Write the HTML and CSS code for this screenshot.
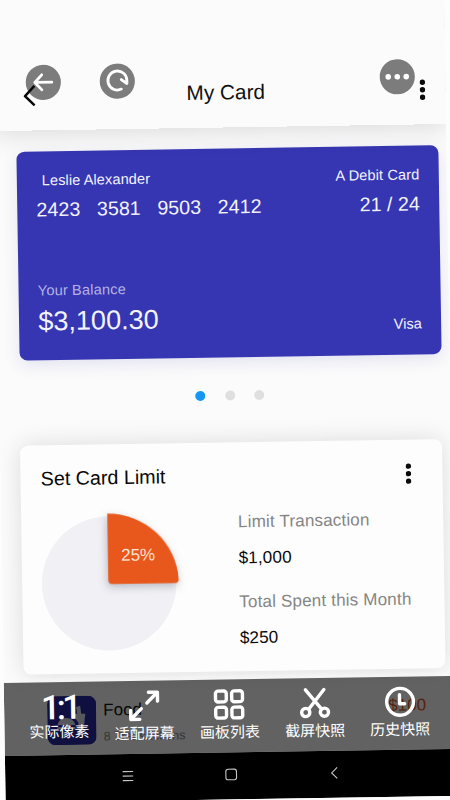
FILE: index.html
```html
<!DOCTYPE html>
<html lang="zh">
<head>
<meta charset="utf-8">
<title>My Card</title>
<link rel="stylesheet" href="styles.css">
</head>
<body>
<div class="screen">
  <header class="header">
    <svg class="chevron" viewBox="0 0 12 22"><path d="M11 1.5 1.5 11.5 11 21" fill="none" stroke="#080808" stroke-width="2.5"/></svg>
    <h1>My Card</h1>
    <svg class="dots" viewBox="0 0 6 22"><circle cx="3" cy="3.9" r="2.7"/><circle cx="3" cy="11.4" r="2.7"/><circle cx="3" cy="18.9" r="2.7"/></svg>
  </header>
  <section class="card">
    <div class="row name"><span>Leslie Alexander</span><span class="kind">A Debit Card</span></div>
    <div class="row number">
      <div class="groups"><span>2423</span><span>3581</span><span>9503</span><span>2412</span></div>
      <span>21 / 24</span>
    </div>
    <div class="label">Your Balance</div>
    <div class="row"><span class="amount">$3,100.30</span><span class="brand">Visa</span></div>
  </section>
  <div class="pager"><i class="on"></i><i></i><i></i></div>
  <section class="limit">
    <div class="row limit-head">
      <h2>Set Card Limit</h2>
      <svg class="dots" viewBox="0 0 6 22"><circle cx="3" cy="3.5" r="2.7"/><circle cx="3" cy="11" r="2.7"/><circle cx="3" cy="18.5" r="2.7"/></svg>
    </div>
    <div class="limit-body">
      <svg class="pie" viewBox="0 0 150 150">
        <circle cx="75" cy="75" r="67.2" fill="#f0f0f5"/>
        <path class="slice" d="M74.2 5.3A71 70.5 0 0 1 144.6 72Q144.6 75.8 141 75.8H78.2Q74.2 75.8 74.2 71.8Z"/>
        <text x="87.4" y="52.7">25%</text>
      </svg>
      <dl>
        <dt>Limit Transaction</dt><dd>$1,000</dd>
        <dt>Total Spent this Month</dt><dd>$250</dd>
      </dl>
    </div>
  </section>
  <section class="list">
    <svg class="food" viewBox="0 0 49 49"><rect width="49" height="49" rx="8" fill="#2a2ba6"/><path d="M10 29Q12 22 19 22T28 29ZM10 31H28V33H10ZM25 18H30L29 11 33 10 34 18H38L36 36H31V27Z" fill="#fff" opacity=".85"/></svg>
    <div class="item"><div class="item-name">Food</div><div class="item-sub">8 Transactions</div></div>
    <div class="price">$100</div>
  </section>

  <div class="floating">
    <svg viewBox="0 0 36 36"><circle cx="18" cy="18" r="17.6" fill="#7c7c7c"/><path d="M26.5 18H10M16.5 10.5 9.5 18 16.5 25.5"/></svg>
    <svg viewBox="0 0 36 36"><circle cx="18" cy="18" r="17.6" fill="#7c7c7c"/><path d="M22 26A9.5 9.5 0 1 1 27.6 17.5V20.5L22 16.5"/></svg>
    <svg class="more" viewBox="0 0 36 36"><circle cx="18" cy="18" r="17.6" fill="#7c7c7c"/><g fill="#fff"><circle cx="9" cy="18" r="2.8"/><circle cx="18" cy="18" r="2.8"/><circle cx="27" cy="18" r="2.8"/></g></svg>
  </div>

  <footer class="bottom">
    <div class="tools">
      <div class="tool first"><b>1:1</b><span>实际像素</span></div>
      <div class="tool"><svg viewBox="0 0 32 32"><path d="M18.8 13.2 29 3M20.5 2.5H29.5V11.5M13.2 18.8 3 29M2.5 20.5V29.5H11.5"/></svg><span>适配屏幕</span></div>
      <div class="tool"><svg viewBox="0 0 32 32"><rect x="2.5" y="2.5" width="10.8" height="10.8" rx="2.6"/><rect x="18.7" y="2.5" width="10.8" height="10.8" rx="2.6"/><rect x="2.5" y="18.7" width="10.8" height="10.8" rx="2.6"/><rect x="18.7" y="18.7" width="10.8" height="10.8" rx="2.6"/></svg><span>画板列表</span></div>
      <div class="tool"><svg viewBox="0 0 32 32"><path d="M6.5 2.5 22.5 22M25 2.5 9.5 22"/><circle cx="6.5" cy="25.2" r="4.1"/><circle cx="25.2" cy="25.2" r="4.1"/></svg><span>截屏快照</span></div>
      <div class="tool"><svg viewBox="0 0 32 32"><circle cx="16" cy="16" r="13.4"/><path d="M15.5 9V18H20.5"/></svg><span>历史快照</span></div>
    </div>
    <div class="nav">
      <svg viewBox="0 0 14 14"><path d="M1.5 2.5H12M1.5 7H12M1.5 11.5H12"/></svg>
      <svg viewBox="0 0 14 14"><rect x="1.7" y="1.7" width="10.6" height="10.6" rx="2.2"/></svg>
      <svg viewBox="0 0 14 14"><path d="M10 1.5 4.5 7 10 12.5"/></svg>
    </div>
  </footer>
</div>
</body>
</html>
```
FILE: styles.css
```css
* { box-sizing: border-box; }
html { overflow: hidden; background: #fff; }
body { margin: 0; width: 450px; height: 800px; overflow: hidden; background: #fdfdfd; font-family: "Liberation Sans", "Noto Sans CJK SC", sans-serif; }
h1, h2, dl, dd { margin: 0; font-weight: 400; }
svg { display: block; flex: none; }

.screen { position: relative; width: 451.4px; height: 803.4px; margin-left: -6.7px; background: #fbfbfb; transform: rotate(-0.9deg); transform-origin: 6.7px 0; overflow: hidden; }
.row { display: flex; justify-content: space-between; }

.header { position: relative; z-index: 1; display: grid; grid-template-columns: 163px 1fr auto; align-items: center; height: 131.2px; padding: 60.8px 20.6px 0 29px; box-shadow: 0 5px 24px rgba(0, 0, 0, .12); }
.chevron { width: 12px; height: 22px; }
.header h1 { font-size: 20.8px; line-height: 24px; color: #111; }
.dots { width: 6px; height: 22px; fill: #0b0b0b; }

.card { position: relative; margin: 20.6px 0 0 20.6px; width: 422px; height: 209.6px; padding: 20px 19px 0 19.6px; border-radius: 8px; background: #3636b2; color: #f3f3fc; box-shadow: 0 5px 16px rgba(60, 60, 180, .13); font-size: 14.6px; line-height: 18px; }
.name { padding-left: 5.7px; letter-spacing: .08px; }
.kind { letter-spacing: .1px; }
.number { margin-top: 7.8px; font-size: 19.7px; line-height: 24px; }
.groups { display: flex; gap: 16.6px; }
.label { margin-top: 60.4px; color: #b3b2e3; letter-spacing: .15px; }
.amount { margin-top: 7.1px; font-size: 27.1px; line-height: 30px; }
.brand { margin-top: 21px; }

.pager { display: flex; gap: 19.5px; margin: 32.2px 0 0 196px; }
.pager i { width: 10px; height: 10px; border-radius: 50%; background: #dfdfdf; }
.pager .on { background: #1496f2; }

.limit { position: relative; margin: 42.2px 0 0 20.4px; width: 422px; height: 229px; border-radius: 8px; background: #fdfdfd; box-shadow: 0 0 24px rgba(0, 0, 0, .13); }
.limit-head { padding: 21px 31.5px 0 19.8px; height: 45.6px; }
.limit-head h2 { font-size: 19.7px; line-height: 24px; color: #080808; }
.limit-head .dots { margin-top: 2px; }
.limit-body { display: flex; padding: 19px 0 0 11.4px; }
.pie { width: 150px; height: 150px; overflow: visible; }
.slice { fill: #e8581c; filter: drop-shadow(-1px 3px 4px rgba(60, 60, 80, .3)); }
.pie text { font-size: 17px; fill: #ffe4d6; }
dl { padding: 5.6px 0 0 55px; font-size: 17.1px; line-height: 20px; white-space: nowrap; letter-spacing: .14px; }
dt { color: #858585; }
dd { margin: 15.6px 0 24.7px; color: #0a0a0a; }

.list { display: flex; margin: 4.4px 0 0 20.6px; width: 422.4px; height: 90px; padding: 18px 21px 0 22.3px; background: #fdfdfd; }
.food { width: 49px; height: 49px; }
.item { flex: 1; padding: 5.2px 0 0 7.2px; }
.item-name { font-size: 17px; line-height: 20px; color: #111; }
.item-sub { margin-top: 6.3px; font-size: 12.6px; line-height: 18px; color: #888; }
.price { padding-top: 5.2px; font-size: 17px; line-height: 20px; color: #e8581c; }

.floating { position: absolute; top: 65.2px; left: 30.8px; width: 390px; display: flex; gap: 38.5px; fill: none; stroke: #fff; stroke-width: 2.8; stroke-linecap: round; stroke-linejoin: round; }
.floating svg { width: 36px; height: 36px; }
.floating circle { stroke: none; }
.floating .more { margin-left: auto; }

.bottom { position: absolute; left: 0; right: -12px; bottom: 0; height: 120.5px; }
.tools { display: flex; height: 73px; padding: 9px 0 0 12.4px; background: rgba(0, 0, 0, .61); color: #fff; }
.tool { display: flex; flex-direction: column; align-items: center; width: 85.2px; font: 15px/20px "Noto Sans CJK SC", sans-serif; }
.tool svg { width: 32px; height: 32px; fill: none; stroke: #fff; stroke-width: 3.4; stroke-linecap: round; stroke-linejoin: round; }
.tool span { margin-top: 1px; white-space: nowrap; }
.tool b { height: 32px; padding-left: 1px; font: 500 34px/32px Roboto, sans-serif; letter-spacing: -3.6px; }
.first span { margin-top: -2px; }
.nav { display: flex; gap: 89px; height: 47.5px; padding: 15.4px 0 0 116.4px; background: #000; }
.nav svg { width: 14px; height: 14px; fill: none; stroke: #c8c8c8; stroke-width: 1.1; }
```
